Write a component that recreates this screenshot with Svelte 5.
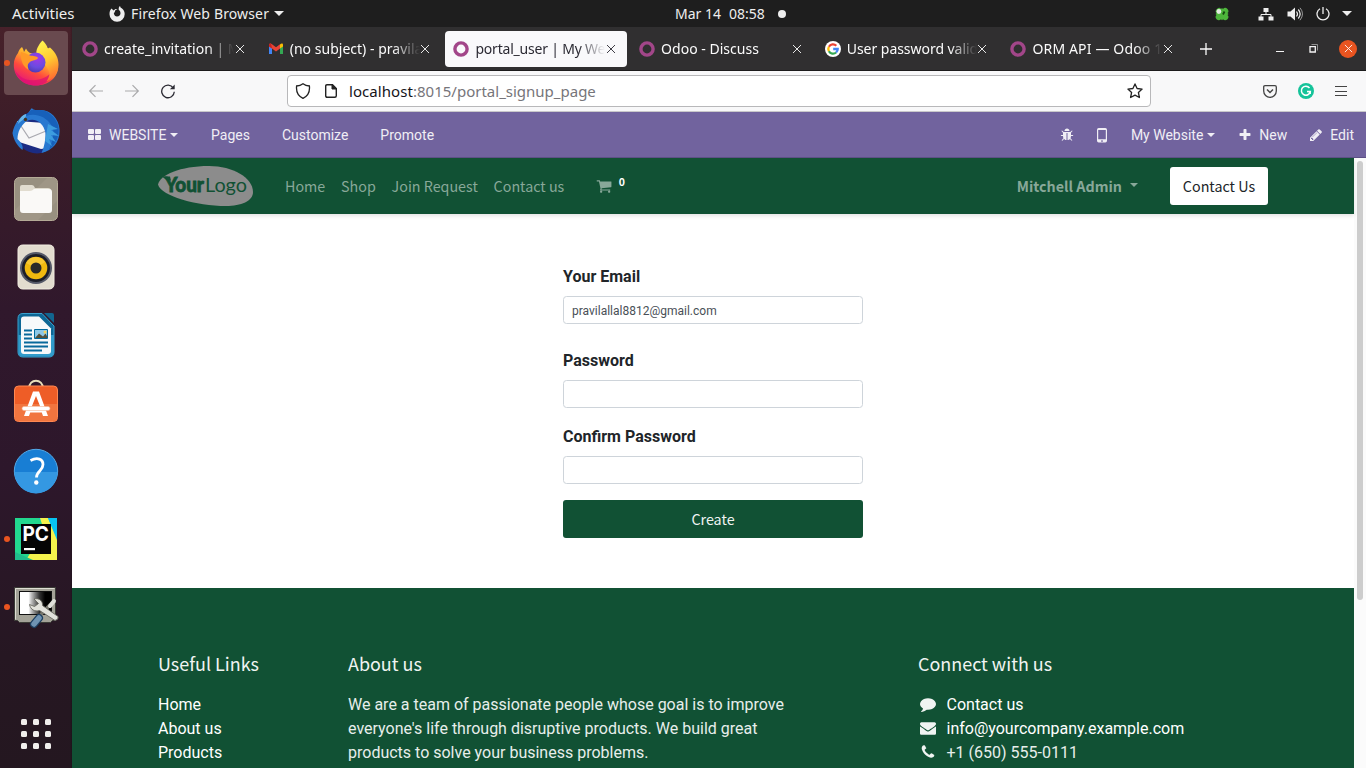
<script>
  const tabs = [
    { icon: 'odoo', title: 'create_invitation | My', spacing: 0 },
    { icon: 'gmail', title: '(no subject) - pravilal', spacing: 0.02 },
    { icon: 'odoo', title: 'portal_user | My Web', spacing: -0.2, active: true },
    { icon: 'odoo', title: 'Odoo - Discuss', spacing: 0.02 },
    { icon: 'google', title: 'User password valida', spacing: -0.04 },
    { icon: 'odoo', title: 'ORM API — Odoo 15', spacing: 0.15 }
  ];
  const dock = ['firefox', 'thunderbird', 'files', 'rhythmbox', 'writer', 'software', 'help', 'pycharm', 'tweaks'];
  const running = ['firefox', 'pycharm', 'tweaks'];
  const menu = ['Home', 'Shop', 'Join Request', 'Contact us'];

  const fa = {
    cart: 'M704 1536q0 52-38 90t-90 38-90-38-38-90 38-90 90-38 90 38 38 90zm896 0q0 52-38 90t-90 38-90-38-38-90 38-90 90-38 90 38 38 90zm128-1088v512q0 24-16.5 42.5t-40.5 21.5l-1044 122q13 60 13 70 0 16-24 64h920q26 0 45 19t19 45-19 45-45 19h-1024q-26 0-45-19t-19-45q0-11 8-31.5t16-36 21.5-40 15.5-29.5l-177-823h-204q-26 0-45-19t-19-45 19-45 45-19h256q16 0 28.5 6.5t19.5 15.5 13 24.5 8 26 5.5 29.5 4.5 26h1201q26 0 45 19t19 45z',
    phone: 'M1600 1240q0 27-10 70.5t-21 68.5q-21 50-122 106-94 51-186 51-27 0-53-3.5t-57.5-12.5-47-14.5-55.5-20.5-49-18q-98-35-175-83-127-79-264-216t-216-264q-48-77-83-175-3-9-18-49t-20.5-55.5-14.5-47-12.5-57.5-3.5-53q0-92 51-186 56-101 106-122 25-11 68.5-21t70.5-10q14 0 21 3 18 6 53 76 11 19 30 54t35 63.5 31 53.5q3 4 17.5 25t21.5 35.5 7 28.5q0 20-28.5 50t-62 55-62 53-28.5 46q0 9 5 22.5t8.5 20.5 14 24 11.5 19q76 137 174 235t235 174q2 1 19 11.5t24 14 20.5 8.5 22.5 5q18 0 46-28.5t53-62 55-62 50-28.5q14 0 28.5 7t35.5 21.5 25 17.5q25 15 53.5 31t63.5 35 54 30q70 35 76 53 3 7 3 21z',
    envelope: 'M1792 710v794q0 66-47 113t-113 47h-1472q-66 0-113-47t-47-113v-794q44 49 101 87 362 246 497 345 57 42 92.5 65.5t94.5 48 110 24.5h2q51 0 110-24.5t94.5-48 92.5-65.5q170-123 498-345 57-39 100-87zm0-294q0 79-49 151t-122 123q-376 261-468 325-10 7-42.5 31t-54 38.5-52 32.5-57.5 27-50 9h-2q-23 0-50-9t-57.5-27-52-32.5-54-38.5-42.5-31q-91-64-262-182.5t-205-142.5q-62-42-117-115.5t-55-136.5q0-78 41.5-130t118.5-52h1472q65 0 112.5 47t47.5 113z',
    comment: 'M1792 896q0 174-120 321.5t-326 233-450 85.5q-70 0-145-8-198 175-460 242-49 14-114 22-17 2-30.5-9t-17.5-29v-1q-3-4-.5-12t2-10 4.5-9.5l6-9 7-8.5 8-9q7-8 31-34.5t34.5-38 31-39.5 32.5-51 27-59 26-76q-157-89-247.5-220t-90.5-281q0-174 120-321.5t326-233 450-85.5 450 85.5 326 233 120 321.5z',
    plus: 'M1600 736v192q0 40-28 68t-68 28h-416v416q0 40-28 68t-68 28h-192q-40 0-68-28t-28-68v-416h-416q-40 0-68-28t-28-68v-192q0-40 28-68t68-28h416v-416q0-40 28-68t68-28h192q40 0 68 28t28 68v416h416q40 0 68 28t28 68z',
    pencil: 'M491 1536l91-91-235-235-91 91v107h128v128h107zm523-928q0-22-22-22-10 0-17 7l-542 542q-7 7-7 17 0 22 22 22 10 0 17-7l542-542q7-7 7-17zm-54-192l416 416-832 832h-416v-416zm683 96q0 53-37 90l-166 166-416-416 166-165q36-38 90-38 53 0 91 38l235 234q37 39 37 91z',
    bug: 'M1696 960q0 26-19 45t-45 19h-224q0 171-67 290l208 209q19 19 19 45t-19 45q-18 19-45 19t-45-19l-198-197q-5 5-15 13t-42 28.5-65 36.5-82 29-97 13v-896h-128v896q-51 0-101.5-13.5t-87-33-66-39-43.5-32.5l-15-14-183 207q-20 21-48 21-24 0-43-16-19-18-20.5-44.5t15.5-46.5l202-227q-58-114-58-274h-224q-26 0-45-19t-19-45 19-45 45-19h224v-294l-173-173q-19-19-19-45t19-45 45-19 45 19l173 173h844l173-173q19-19 45-19t45 19 19 45-19 45l-173 173v294h224q26 0 45 19t19 45zm-480-576h-640q0-133 93.5-226.5t226.5-93.5 226.5 93.5 93.5 226.5z'
  };
</script>

{#snippet glyph(name, size)}
  <svg class="glyph" width={size} height={size} viewBox="0 0 1792 1792"><path d={fa[name]} fill="currentColor" /></svg>
{/snippet}

{#snippet favicon(kind)}
  <svg width="16" height="16" viewBox="0 0 16 16">
    {#if kind === 'odoo'}
      <circle cx="8" cy="8" r="6.1" fill="none" stroke="#a24689" stroke-width="3.4" />
    {:else if kind === 'gmail'}
      <path d="M1 4.5V13h3V7z" fill="#4285f4" />
      <path d="M15 4.5V13h-3V7z" fill="#34a853" />
      <path d="M12 3.6v4l3-2.2V4c0-1.6-1.600-2-3-.4z" fill="#fbbc04" />
      <path d="M1 4c0-1.600 1.700-2 3-.8l4 3 4-3v4.300l-4 3-4-3L1 5.400z" fill="#ea4335" />
      <path d="M1 4c0-1.300 1.200-1.800 2-1.400L4 7.500 1 5.400z" fill="#c5221f" />
    {:else}
      <circle cx="8" cy="8" r="8" fill="#fff" />
      <g fill="none" stroke-width="2.300">
        <path d="M3.900 5.700a4.700 4.700 0 0 1 7.400-1" stroke="#ea4335" />
        <path d="M3.900 10.300a4.700 4.700 0 0 1 0-4.600" stroke="#fbbc05" />
        <path d="M3.900 10.300a4.700 4.700 0 0 0 7.200 1.200" stroke="#34a853" />
        <path d="M8.200 8h4.500a4.700 4.700 0 0 1-1.600 3.500" stroke="#4285f4" />
      </g>
    {/if}
  </svg>
{/snippet}

{#snippet launcher(kind)}
  <svg width="48" height="48" viewBox="0 0 48 48">
    {#if kind === 'firefox'}
      <defs>
        <linearGradient id="ffBody" x1="0.8" y1="0.1" x2="0.3" y2="1"><stop offset="0" stop-color="#fff14a" /><stop offset="0.35" stop-color="#ffb02e" /><stop offset="0.65" stop-color="#ff4b3d" /><stop offset="1" stop-color="#e4127e" /></linearGradient>
        <radialGradient id="ffGlobe" cx="0.6" cy="0.3" r="0.8"><stop offset="0" stop-color="#a138e8" /><stop offset="0.55" stop-color="#6a4be0" /><stop offset="1" stop-color="#4a35a8" /></radialGradient>
        <linearGradient id="ffTail" x1="0.3" y1="0" x2="0.6" y2="1"><stop offset="0" stop-color="#fff44f" /><stop offset="0.5" stop-color="#ffc831" /><stop offset="1" stop-color="#ff6a30" /></linearGradient>
      </defs>
      <path d="M10 8c1 1.500 1.500 3 2 5l2-3.500c1 2 2 3 4 4.500h10l4-8c4 4 14 11 14 22 0 10-9 18.500-22 18.500S1.800 38 1.800 26c0-5 1.500-8 4.200-12 .5-2 2-4.500 4-6z" fill="url(#ffBody)" />
      <path d="M3 31c5 9 13 11 21 10 8-1 14-5 19-11-2 10-10 16.500-19.500 16.500C13 46.500 5 40 3 31z" fill="#dd0f72" opacity=".7" />
      <path d="M30.500 1.500c2.500 2 4.500 5 5.300 8l2.200-1c6 5 8.500 11 8.500 17 0 9-5 14-12 17 4-6 4-10-1-16-2-4-5-6-9-11-1-4 2-10 6-14z" fill="url(#ffTail)" />
      <circle cx="23.500" cy="23.500" r="10" fill="url(#ffGlobe)" />
      <path d="M9 13c4 1 6 2 9 3.500 3 .5 7 .5 8 2.500-1 2.500-6 2-8 4-3 2-2.500 5-1 8-5-2-9-9-8-18z" fill="#ff9a27" />
    {:else if kind === 'thunderbird'}
      <circle cx="25" cy="25" r="21.500" fill="#1b2c83" />
      <path d="M5 14l28 2 2 25-6 1L4 34z" fill="#f7f7f8" />
      <path d="M7 16l10 15 17-7" fill="none" stroke="#a9a9b0" stroke-width="1.200" />
      <path d="M20 1c-3 3-3 5-5 6C8 9 2 17 .5 26c1 7 5 13 10 17 1-4-1-7-5-11 0-7 3-13 9-18 9-4 17 2 19 12 0 7-1 13-4 20 12-3 19-12 18-24C47 11 37 2 28 3c-5 0-7 0-8-2z" fill="#2878d0" />
      <path d="M19 3c-4 5-6 5-5 6 8-3 19-1 26 10 3 6 1 14-3 24 8-7 11-16 9-25C43 9 35 3 28 3z" fill="#1760ba" />
      <path d="M6 17c1-5 4-9 8-10 1 4-4 6-8 10z" fill="#66b6e8" /><circle cx="13.500" cy="12.500" r="1.700" fill="#42321f" />
      <path d="M36 17l10 5-7 1 8 6-8-1 5 7-7-3 3 7-7-5z" fill="#3c9cdf" />
    {:else if kind === 'files'}
      <rect x="2.500" y="2.500" width="43" height="43" rx="5" fill="#989080" stroke="#b5ab97" />
      <path d="M3 35L35 3h7q3 0 3 3v20L26 45H6q-3 0-3-3z" fill="#a69c8b" opacity=".5" />
      <path d="M8 12q0-2 2-2h10q2 0 3 3h13q3 0 3 3v4H8z" fill="#e1dccf" />
      <path d="M8 16h10q2 0 4-2h15q3 0 3 3v18q0 3-3 3H11q-3 0-3-3z" fill="#faf9f7" />
    {:else if kind === 'rhythmbox'}
      <rect x="6" y="2" width="36" height="44" rx="4.500" fill="#e2dccf" stroke="#f1ece1" />
      <circle cx="24" cy="25" r="16" fill="#555968" /><circle cx="24" cy="25" r="14" fill="#1c1e28" />
      <circle cx="24" cy="25" r="11.300" fill="#f0b90f" /><path d="M24 25L14 20a11 11 0 0 1 19-1z" fill="#fbcf43" opacity=".7" /><circle cx="24" cy="25" r="5.500" fill="#2a2a2a" />
    {:else if kind === 'writer'}
      <path d="M11 2.500h19L42 15v26q0 5-5 5H11q-5 0-5-5V7.500q0-5 5-5z" fill="#0d6795" stroke="#3ba1cd" />
      <path d="M6.500 24H42v17q0 4.500-5 4.500H11q-4.500 0-4.500-4.500z" fill="#319bca" />
      <path d="M12 5.500h15l12 12V40q0 3-3 3H12q-3 0-3-3V8.500q0-3 3-3z" fill="#f7f9fa" />
      <path d="M32 2h8q2 0 2 2v8z" fill="#12658f" />
      <path d="M12 19.500h8M12 23.500h8M12 27.500h8M12 31.500h24M12 35.500h24M12 39.500h18" stroke="#08699b" stroke-width="1.800" />
      <path d="M22.500 18.500h13v9h-13z" fill="#8cc8e8" stroke="#00699d" /><path d="M23 27l4-4.500 4 3 2.500-3 2 3.500v1z" fill="#52513d" /><circle cx="33" cy="21" r="1.500" fill="#f4d35b" />
    {:else if kind === 'software'}
      <path d="M17 9.500c0-10.500 14-10.500 14 0" fill="none" stroke="#e8dfba" stroke-width="2" />
      <rect x="2.500" y="7" width="43" height="35.500" rx="4" fill="#ee5d27" stroke="#ff8852" />
      <path d="M3 25h42v13.500q0 3.500-4 3.500H7q-4 0-4-3.500z" fill="#f1753f" />
      <path d="M12 37h5l1.200-3.500h11.600L31 37h5L27 12.500h-6zM19.800 27.500L24 17l4.200 10.500z" fill="#fff" fill-rule="evenodd" />
      <rect x="10" y="27.500" width="28" height="4" rx="2" fill="#fff" stroke="#f3b596" stroke-width=".6" />
    {:else if kind === 'help'}
      <circle cx="24" cy="24" r="21.700" fill="#187ed4" stroke="#53a9e7" />
      <path d="M2.500 25h43a21.500 21.500 0 0 1-43 0z" fill="#3498e2" />
      <path d="M18.500 13.500c7-3.600 12.500-1.500 12.500 4 0 6.500-6.500 6.500-6.500 13" fill="none" stroke="#fff" stroke-width="2.800" /><circle cx="24.300" cy="35.500" r="2.200" fill="#fff" />
    {:else if kind === 'pycharm'}
      <path d="M3 3h42v42H3z" fill="#22d88f" /><path d="M27 3h18v22z" fill="#0bbce8" /><path d="M28 3h8l9 20v22H14l5-8h20z" fill="#f4f34c" /><path d="M36 3h9v22z" fill="#07c3f2" /><path d="M3 37l18 8H3z" fill="#1fbf8d" />
      <path d="M9 9h30v30H9z" fill="#050505" /><path d="M12 33h11v2.200H12z" fill="#fff" />
      <text x="10.500" y="26" class="pc" textLength="26.500" lengthAdjust="spacingAndGlyphs">PC</text>
    {:else}
      <defs><linearGradient id="screen"><stop offset=".28" stop-color="#fff" /><stop offset=".38" stop-color="#bbb" /><stop offset=".62" stop-color="#333" /><stop offset=".8" stop-color="#000" /></linearGradient></defs>
      <path d="M2.500 4.500h41v33h-3l-2 2h-31l-2-2h-3z" fill="#a3a297" stroke="#3b3b36" />
      <path d="M3.500 36.500v-31h39" fill="none" stroke="#deddd3" />
      <rect x="7.500" y="8.500" width="32" height="23" fill="url(#screen)" stroke="#111" />
      <path d="M41 19l-10 10-3 4" stroke="#77776e" stroke-width="3.500" /><path d="M42 18l-4 5" stroke="#e1e1db" stroke-width="4" stroke-linecap="round" />
      <path d="M27 35l-5 6" stroke="#1d3f60" stroke-width="8" stroke-linecap="round" /><path d="M27 35l-5 6" stroke="#6f93b3" stroke-width="5.500" stroke-linecap="round" />
      <path d="M22 16c5-1.500 9 2 8.500 6.500L46 33.500q1 3-3 4L27.500 27.500c-5 1.500-9-1-10-6l5 2 4-3z" fill="#e2e2dc" stroke="#696961" stroke-width=".9" />
    {/if}
  </svg>
{/snippet}

{#snippet cross(size)}
  <svg class="cross" width={size} height={size} viewBox="0 0 10 10"><path d="M1 1l8 8M9 1L1 9" fill="none" stroke="currentColor" stroke-width="1" /></svg>
{/snippet}

<div class="desktop">
  <header class="topbar">
    <div class="top-left">
      <span class="activities">Activities</span>
      <span class="app-menu">
        <svg width="16" height="16" viewBox="0 0 16 16"><path d="M2.500 2.500l2 2 2-1.500 2 .5C6 4 5.600 5 6 6l-1.200 1C5 9.500 6.500 10.500 8 10.500c2.200 0 3.500-1.500 3.500-3.200 0-1.500-.6-2.500-1.700-3.200C9.500 2.500 9.800 1 11 0c.5 1.500 1 2 2 2.500 1.500 1 2.700 3 2.700 5.500A7.600 7.600 0 0 1 8 15.700 7.500 7.500 0 0 1 .5 8.200C.5 6 1 4 2.500 2.500z" fill="#eee" /></svg>
        <span class="app-name">Firefox Web Browser</span>
        <i class="arrow"></i>
      </span>
    </div>
    <div class="clock"><span>Mar 14</span><span>08:58</span><i class="dot"></i></div>
    <div class="tray">
      <svg class="clover" width="14" height="14" viewBox="0 0 14 14"><path d="M2 2q2.500-2.500 4 0L7 1l1 1q2-2.500 4.500 0 2 2.500 0 4l1 1-1 1q2 2 0 4.200-2.500 2-4.500 0l-1 1-1-1q-2 2-4.500 0-2-2.500 0-4.200l-1-1 1-1Q-.500 4 2 2z" fill="#4db53b" /><path d="M8 7.500L9.500 4.500" stroke="#16490f" stroke-width="1.800" /><circle cx="3.900" cy="4.500" r="2.400" fill="#e3ebe1" /></svg>
      <svg width="16" height="14" viewBox="0 0 16 14"><path d="M5.500 1h5v4h-5zM.5 9.500h5v4h-5zM10.500 9.500h5v4h-5z" fill="#eee" /><path d="M8 5v2.500M3 10V7.500h10V10" fill="none" stroke="#eee" /></svg>
      <svg width="16" height="16" viewBox="0 0 16 16"><path d="M.5 5.500h3L8 1.500v13l-4.500-4h-3z" fill="#eee" /><path d="M9.500 5.500q2 2.500 0 5M11.300 3.500q3.700 4.500 0 9" fill="none" stroke="#eee" stroke-width="1.200" /><path d="M13 1.800q5 6 0 12.400" fill="none" stroke="#999" /></svg>
      <svg width="14" height="14" viewBox="0 0 14 14"><path d="M4 1.700a6 6 0 1 0 6 0M7 0v7" fill="none" stroke="#eee" stroke-width="1.300" /></svg>
      <i class="arrow"></i>
    </div>
  </header>

  <aside class="dock">
    {#each dock as app}
      <div class="slot" class:focused={app === 'firefox'}>
        {#if running.includes(app)}<i class="pip"></i>{/if}
        {@render launcher(app)}
      </div>
    {/each}
    <div class="apps">{#each Array(9) as _}<i></i>{/each}</div>
  </aside>

  <div class="browser">
    <div class="tabstrip">
      {#each tabs as tab}
        <div class="tab" class:active={tab.active}>
          {@render favicon(tab.icon)}
          <span class="title" style="letter-spacing: {tab.spacing}px">{tab.title}</span>
          {@render cross(10)}
        </div>
      {/each}
      <svg class="newtab" width="12" height="12" viewBox="0 0 12 12"><path d="M6 0v12M0 6h12" stroke="#fbfbfb" stroke-width="1.300" /></svg>
      <div class="window-buttons">
        <svg width="8" height="12" viewBox="0 0 8 12"><path d="M0 8.500h8" stroke="#f4f4f4" /></svg>
        <svg width="9" height="9" viewBox="0 0 9 9"><path d="M1 2.700h5.300V8H1z" fill="none" stroke="#f4f4f4" stroke-width="1.300" /><path d="M2.500.5h6v6" fill="none" stroke="#aaa" stroke-width=".8" /></svg>
        <span class="close">{@render cross(9)}</span>
      </div>
    </div>

    <div class="toolbar">
      <div class="nav-buttons">
        <svg width="16" height="16" viewBox="0 0 16 16"><path d="M15 8H2M7.500 2.200L1.700 8l5.800 5.800" fill="none" stroke="#a9a9ab" stroke-width="1.200" /></svg>
        <svg width="16" height="16" viewBox="0 0 16 16"><path d="M1 8h13M8.500 2.200L14.300 8l-5.800 5.800" fill="none" stroke="#a9a9ab" stroke-width="1.200" /></svg>
        <svg width="16" height="16" viewBox="0 0 16 16"><path d="M13.300 5A6.300 6.300 0 1 0 14.300 8.800" fill="none" stroke="#2b2a33" stroke-width="1.300" /><path d="M14.700 1.500v4.800H9.900z" fill="#2b2a33" /></svg>
      </div>
      <div class="urlbar">
        <svg width="16" height="16" viewBox="0 0 16 16"><path d="M8 .8C6 2.300 4 2.900 1.600 3c-.6 5.500 1.500 10 6.400 12.300C12.900 13 15 8.500 14.400 3 12 2.900 10 2.300 8 .8z" fill="none" stroke="#222" stroke-width="1.300" /></svg>
        <svg class="doc" width="12" height="14" viewBox="0 0 12 14"><path d="M2 .7h5.500l3.800 3.800v7.300q0 1.500-1.500 1.500H2.200Q.7 13.300.7 11.800V2.200Q.7.7 2 .7z" fill="none" stroke="#222" stroke-width="1.400" /><path d="M7 .7v4.300h4.300z" fill="#222" stroke="#222" /></svg>
        <span class="url"><b>localhost</b>:8015/portal_signup_page</span>
        <svg class="star" width="16" height="16" viewBox="0 0 16 16"><path d="M8 .9l2.100 4.600 5 .6-3.700 3.400 1 5L8 12.100l-4.400 2.400 1-5L.9 6.100l5-.6z" fill="none" stroke="#222" stroke-width="1.300" stroke-linejoin="round" /></svg>
      </div>
      <div class="tools">
        <svg width="14" height="13" viewBox="0 0 14 13"><path d="M2 .7h10q1.300 0 1.300 1.300v4A6.300 6.300 0 0 1 .7 6V2Q.7.700 2 .7z" fill="none" stroke="#444" stroke-width="1.300" /><path d="M4 4.500l3 3 3-3" fill="none" stroke="#444" stroke-width="1.500" /></svg>
        <svg width="16" height="16" viewBox="0 0 16 16"><circle cx="8" cy="8" r="8" fill="#15c39a" /><path d="M11.500 5A4.500 4.500 0 1 0 12.300 8.600H9" fill="none" stroke="#fff" stroke-width="1.500" /><path d="M9.500 8.600h2.800V11" fill="none" stroke="#fff" stroke-width="1.300" /></svg>
        <svg width="12" height="11" viewBox="0 0 12 11"><path d="M0 .5h12M0 5.500h12M0 9.500h12" stroke="#444" stroke-width="1.100" /></svg>
      </div>
    </div>

    <div class="editor-bar">
      <div class="editor-left">
        <span class="website">
          <svg width="13" height="11" viewBox="0 0 13 11"><path d="M1 0h4q1 0 1 1v3q0 1-1 1H1Q0 5 0 4V1q0-1 1-1zM8 0h4q1 0 1 1v3q0 1-1 1H8Q7 5 7 4V1q0-1 1-1zM1 6h4q1 0 1 1v3q0 1-1 1H1q-1 0-1-1V7q0-1 1-1zM8 6h4q1 0 1 1v3q0 1-1 1H8q-1 0-1-1V7q0-1 1-1z" fill="currentColor" /></svg>
          <span>WEBSITE</span><i class="caret"></i>
        </span>
        <span>Pages</span><span>Customize</span><span>Promote</span>
      </div>
      <div class="editor-right">
        <span class="bug">{@render glyph('bug', 14)}</span>
        <svg class="mobile" width="10" height="15" viewBox="0 0 10 15"><path d="M1.700 0h6.600Q10 0 10 1.700v11.100q0 1.700-1.700 1.700H1.700Q0 14.500 0 12.800V1.700Q0 0 1.700 0zm-.5 2v9.300h7.600V2zM5 12.200a.8.8 0 1 0 .01 0z" fill="currentColor" fill-rule="evenodd" /></svg>
        <span class="mysite">My Website<i class="caret"></i></span>
        <span class="new">{@render glyph('plus', 14)}New</span>
        <span class="edit">{@render glyph('pencil', 14)}Edit</span>
      </div>
    </div>

    <div class="viewport">
      <div class="page">
        <nav class="site-nav">
          <svg class="logo" width="95" height="40" viewBox="0 0 95 40">
            <path d="M0 18.500C2 9 22 0 51 0c24 0 44 12 44 26 0 9-12 14-27 14C38 40 3 30 0 18.500z" fill="#8c8c8c" />
            <path d="M4 10.500h8l1 4H9z" fill="#115134" />
            <text x="7" y="25.500" class="logo-bold" textLength="39" lengthAdjust="spacingAndGlyphs">Your</text>
            <text x="47" y="25.500" class="logo-light" textLength="42" lengthAdjust="spacingAndGlyphs">Logo</text>
          </svg>
          <div class="menu">{#each menu as item}<span>{item}</span>{/each}</div>
          <div class="cart">{@render glyph('cart', 16)}<sup>0</sup></div>
          <div class="user">Mitchell Admin<i class="caret"></i></div>
          <button class="contact">Contact Us</button>
        </nav>

        <main>
          <form>
            <label for="email">Your Email</label>
            <input id="email" class="first" type="text" value="pravilallal8812@gmail.com" />
            <label for="pw">Password</label>
            <input id="pw" type="password" />
            <label for="confirm">Confirm Password</label>
            <input id="confirm" type="password" />
            <button type="button" class="create">Create</button>
          </form>
        </main>

        <footer>
          <section>
            <h5>Useful Links</h5>
            <p>Home</p><p>About us</p><p>Products</p>
          </section>
          <section>
            <h5>About us</h5>
            <p class="faded">We are a team of passionate people whose goal is to improve</p>
            <p class="faded">everyone's life through disruptive products. We build great</p>
            <p class="faded">products to solve your business problems.</p>
          </section>
          <section>
            <h5>Connect with us</h5>
            <p class="line">{@render glyph('comment', 16)}Contact us</p>
            <p class="line">{@render glyph('envelope', 16)}info@yourcompany.example.com</p>
            <p class="line">{@render glyph('phone', 16)}<span class="faded">+1 (650) 555-0111</span></p>
          </section>
        </footer>
      </div>
      <div class="scrollbar"><i></i></div>
    </div>
  </div>
</div>

<style>
  :global(body) { overflow: hidden; background: #fff; }
  * { box-sizing: border-box; }
  svg { display: block; flex: none; }
  i { display: block; flex: none; font-style: normal; }

  .desktop {
    display: grid;
    grid-template: 27px 741px / 72px 1294px;
    width: 1366px;
    height: 768px;
    overflow: hidden;
    font-family: "Noto Sans", sans-serif;
  }

  .topbar {
    grid-column: 1 / 3;
    display: grid;
    grid-template-columns: 1fr auto 1fr;
    align-items: center;
    background: #1e1e1e;
    color: #eee;
    font-size: 14px;
    line-height: 27px;
    white-space: nowrap;
  }
  .top-left { display: flex; align-items: center; padding-left: 12px; gap: 34px; }
  .activities { font-size: 15px; width: 63px; }
  .app-menu { display: flex; align-items: center; gap: 6px; }
  .app-name { letter-spacing: 0.14px; width: 137px; }
  .arrow { border: 5px solid transparent; border-top-color: #eee; border-bottom: 0; }
  .clock { display: flex; align-items: center; gap: 8px; width: 202px; padding-left: 93px; }
  .dot { width: 8px; height: 8px; border-radius: 50%; background: #eee; margin-left: 5px; }
  .tray { display: flex; align-items: center; justify-content: flex-end; gap: 13px; padding-right: 14px; }
  .tray .arrow { margin-left: -1px; }
  .clover { margin-right: 16px; }

  .dock {
    display: flex;
    flex-direction: column;
    align-items: center;
    padding-top: 4px;
    gap: 4px;
    background: linear-gradient(90deg, transparent 70px, #0003), linear-gradient(#47212a 0, #3a1c28 16%, #30182c 38%, #2d172b 60%, #261722 85%, #241720);
  }
  .slot { position: relative; display: grid; place-items: center; width: 64px; height: 64px; border-radius: 4px; }
  .focused { background: #694a4f; }
  .pip { position: absolute; left: 0; top: 29px; width: 6px; height: 6px; border-radius: 50%; background: #e95420; }
  .apps { display: grid; grid-template-columns: repeat(3, 6px); gap: 6px; margin-top: 76px; }
  .apps i { width: 6px; height: 6px; border-radius: 1.500px; background: #f0eeec; }

  .browser { display: flex; flex-direction: column; min-width: 0; }

  .tabstrip {
    display: flex;
    align-items: center;
    height: 44px;
    padding-left: 1.500px;
    background: #302f30;
    border-bottom: 1px solid #1c1b1c;
    color: #fbfbfb;
  }
  .tab {
    display: flex;
    align-items: center;
    width: 182px;
    height: 36px;
    margin-right: 3.700px;
    padding-left: 8.500px;
    border-radius: 4px;
    font-size: 14px;
    line-height: 36px;
  }
  .tab :global(.cross) { opacity: 0.9; }
  .active { background: #f9f9fb; color: #2b2a33; }
  .title {
    width: 130.500px;
    margin-left: 6px;
    overflow: hidden;
    white-space: nowrap;
    mask-image: linear-gradient(90deg, #000 103px, transparent 130px);
  }
  .newtab { margin-left: 12px; }
  .window-buttons { display: flex; align-items: center; margin-left: auto; margin-right: 9px; gap: 25px; }
  .close { display: grid; place-items: center; width: 18px; height: 18px; border-radius: 50%; background: #e95420; margin-left: -4px; }

  .toolbar {
    display: flex;
    align-items: center;
    height: 41px;
    background: #f8f8f9;
    border-bottom: 1px solid #c9c8ca;
  }
  .nav-buttons { display: flex; gap: 20px; width: 215px; padding-left: 16px; }
  .urlbar {
    display: flex;
    align-items: center;
    width: 864px;
    height: 32px;
    padding: 0 7px;
    background: #fff;
    border: 1px solid #b8b8ba;
    border-radius: 4px;
  }
  .doc { margin: 0 12px 0 14px; }
  .url { color: #76757a; font-size: 15px; line-height: 30px; }
  .url b { color: #15141a; font-weight: 400; letter-spacing: 0.07px; }
  .star { margin-left: auto; }
  .tools { display: flex; align-items: center; gap: 21px; margin-left: 112px; }

  .editor-bar {
    display: flex;
    align-items: center;
    justify-content: space-between;
    height: 46px;
    padding: 0 12px 0 16px;
    background: #71639e;
    border-bottom: 1px solid #5d5085;
    color: #f0eef5;
    font: 14px/46px Roboto, sans-serif;
  }
  .editor-left, .editor-right, .editor-bar span { display: flex; align-items: center; }
  .editor-left { gap: 32px; }
  .website { gap: 8px; margin-right: 0.700px; }
  .website .caret { margin-left: -4px; }
  .caret { border: 4px solid transparent; border-top-color: currentColor; border-bottom: 0; }
  .mysite .caret { margin-left: 4px; }
  .mobile { margin: 2px 23.500px 0 23px; }
  .new { gap: 7px; margin-left: 23px; }
  .edit { gap: 7px; margin-left: 22px; }

  .viewport { display: flex; height: 610px; overflow: hidden; }
  .page { width: 1282px; background: #fff; font: 16px/24px Roboto, sans-serif; }
  .scrollbar { width: 12px; background: #fbfbfb; padding: 3px 3px 0; }
  .scrollbar i { width: 6px; height: 439px; border-radius: 3px; background: #cdcdcd; }

  .site-nav, .create, h5, .contact { font-family: "Noto Sans CJK SC", sans-serif; }
  .site-nav {
    position: relative;
    display: flex;
    align-items: center;
    height: 56px;
    padding: 0 86px;
    background: #115134;
    box-shadow: 0 2px 4px #0000001c;
    color: #88a899;
    font-size: 14.300px;
  }
  .menu { display: flex; gap: 15.800px; margin-left: 32px; }
  .cart { display: flex; margin-left: 31.500px; }
  .cart sup { margin: -3px 0 0 7px; color: #fff; font: bold 10.500px/14px "Noto Sans CJK SC", sans-serif; }
  .user { display: flex; align-items: center; margin-left: auto; font-weight: 700; }
  .user .caret { margin: -3px 32px 0 8px; }
  button { padding: 0; border: 0; border-radius: 3px; font-size: 14.300px; line-height: 24px; }
  .contact { width: 98px; height: 38px; background: #fff; color: #212529; }

  main { height: 374px; padding: 50px 0 0 491px; }
  form { display: flex; flex-direction: column; width: 300px; }
  label { padding-top: 1px; margin-bottom: 7px; color: #212529; font-weight: 700; }
  input {
    height: 28px;
    margin-bottom: 16px;
    padding: 2px 8px 0;
    border: 1px solid #ced4da;
    border-radius: 3.500px;
    background: #fff;
    color: #495057;
    font: 12px Roboto, sans-serif;
    outline: 0;
  }
  .first { margin-bottom: 24px; }
  .create { height: 38px; background: #115134; color: #f0f4f2; }

  footer {
    display: grid;
    grid-template-columns: 190px 570px 380px;
    height: 180px;
    padding: 63px 0 0 86px;
    background: #115134;
    color: #fff;
    overflow: hidden;
    white-space: nowrap;
  }
  h5 { margin: 0 0 18px; font-size: 17.950px; font-weight: 400; line-height: 24px; color: #f0f4f2; }
  p { margin: 0; }
  .faded { color: #e7eeeb; }
  .line { display: flex; align-items: center; gap: 10.500px; padding-left: 2px; }
  .line :global(svg) { color: #f0f4f2; margin-top: -2px; }

  .pc { fill: #fff; font: bold 20px Inter, sans-serif; }
  .logo-bold { fill: #115134; stroke: #115134; stroke-width: 0.8px; font: 900 20px Lato, sans-serif; }
  .logo-light { fill: #115134; font: 400 20px Lato, sans-serif; }
</style>
